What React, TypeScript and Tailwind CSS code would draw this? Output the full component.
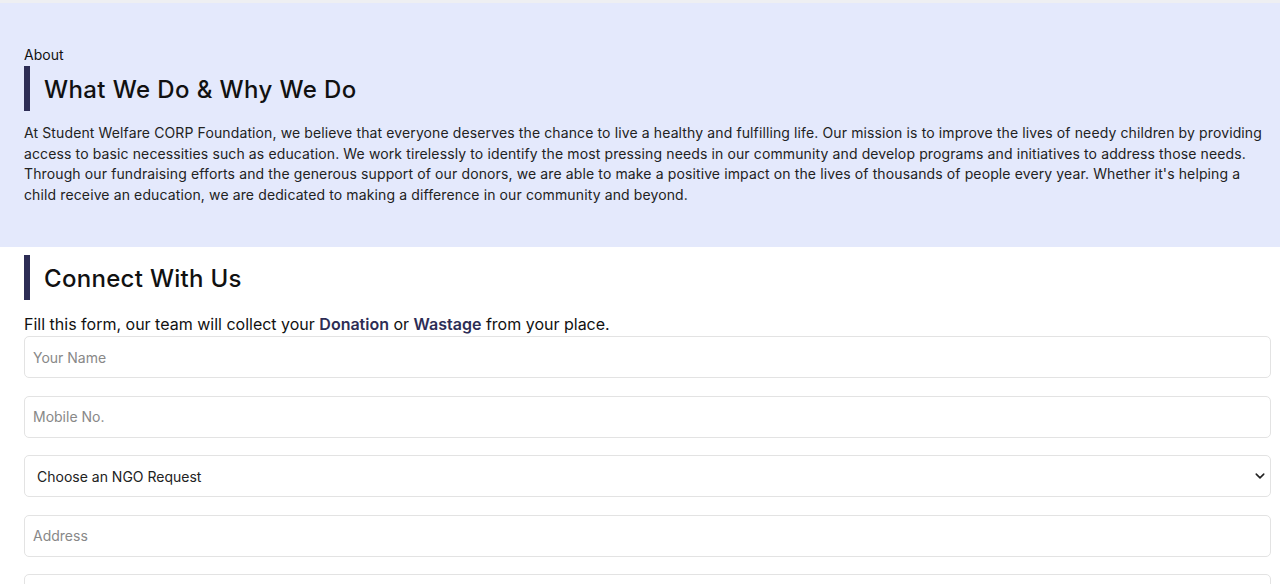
import React from "react";

export default function App() {
  const font = { fontFamily: "Inter, 'Open Sans', sans-serif" };
  const inputCls =
    "h-[42px] w-full rounded-[5px] border border-[#e3e3e3] px-[8px] text-[14px] placeholder:text-[#888] outline-none";
  return (
    <div className="w-[1280px] min-h-[584px] bg-white text-black" style={font}>
      <div className="h-[3px] bg-[#eeeff2]" />
      <section className="bg-[#e4e9fc] px-6 pt-[44px] h-[244px]">
        <div className="text-[14px] leading-[16px] text-[#111]">About</div>
        <div className="flex items-center mt-[3px] h-[45px]">
          <div className="w-[6px] h-[45px] bg-[#2d2d55]" />
          <h2 className="ml-[14px] pt-[3px] text-[24px] tracking-[0.4px] font-medium text-[#111]">What We Do &amp; Why We Do</h2>
        </div>
        <p className="mt-[12px] text-[14px] tracking-[0.12px] leading-[20.5px] text-[#222] whitespace-nowrap">
          At Student Welfare CORP Foundation, we believe that everyone deserves the chance to live a healthy and fulfilling life. Our mission is to improve the lives of needy children by providing
          <br />
          access to basic necessities such as education. We work tirelessly to identify the most pressing needs in our community and develop programs and initiatives to address those needs.
          <br />
          Through our fundraising efforts and the generous support of our donors, we are able to make a positive impact on the lives of thousands of people every year. Whether it's helping a
          <br />
          child receive an education, we are dedicated to making a difference in our community and beyond.
        </p>
      </section>
      <section className="px-6 pt-[8px]">
        <div className="flex items-center h-[45px]">
          <div className="w-[6px] h-[45px] bg-[#2d2d55]" />
          <h2 className="ml-[14px] pt-[3px] text-[24px] tracking-[0.3px] font-medium text-[#111]">Connect With Us</h2>
        </div>
        <p className="mt-[14px] text-[16px] leading-[20px] text-[#111]">
          Fill this form, our team will collect your <b className="font-semibold text-[#2d2d55]">Donation</b> or{" "}
          <b className="font-semibold text-[#2d2d55]">Wastage</b> from your place.
        </p>
        <div className="mt-[2px] flex flex-col gap-[17.5px] w-[1247px]">
          <input className={inputCls} placeholder="Your Name" />
          <input className={inputCls} placeholder="Mobile No." />
          <div className="relative h-[42px] w-full rounded-[5px] border border-[#e3e3e3] flex items-center px-[12px] text-[14px] text-[#222]">
            <span>Choose an NGO Request</span>
            <svg className="absolute right-[5px] top-1/2 -translate-y-1/2" width="10" height="10" viewBox="0 0 16 16">
              <path d="M2 5l6 6 6-6" fill="none" stroke="#222" strokeWidth="2.5" strokeLinecap="round" strokeLinejoin="round" />
            </svg>
          </div>
          <input className={inputCls} placeholder="Address" />
          <input className={inputCls} placeholder="" />
        </div>
      </section>
    </div>
  );
}
